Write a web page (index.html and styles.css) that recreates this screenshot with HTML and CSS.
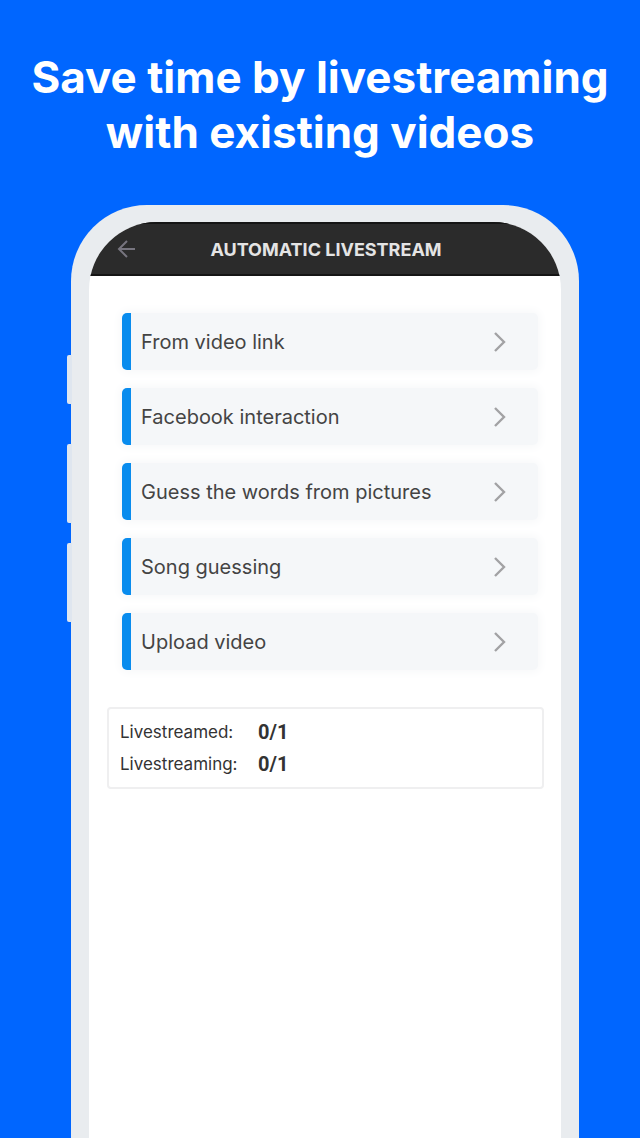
FILE: index.html
```html
<!DOCTYPE html>
<html lang="en">
<head>
    <meta charset="UTF-8">
    <meta name="viewport" content="width=device-width, initial-scale=1.0">
    <title>Automatic Livestream</title>
    <link rel="stylesheet" href="styles.css">
</head>
<body>
    <h1>Save time by livestreaming<br>with existing videos</h1>

    <div class="phone">
        <span class="side-button mute"></span>
        <span class="side-button volume-up"></span>
        <span class="side-button volume-down"></span>

        <div class="screen">
            <header class="top-bar">
                <button class="back" type="button" aria-label="Back">
                    <svg width="20" height="20" viewBox="0 0 20 20"><path d="M18 10H2M10 2L2 10l8 8"/></svg>
                </button>
                <h2>AUTOMATIC LIVESTREAM</h2>
            </header>

            <nav class="menu">
                <a href="#link">From video link
                    <svg width="14" height="22" viewBox="0 0 14 22"><path d="M2 2l9 9-9 9"/></svg>
                </a>
                <a href="#facebook">Facebook interaction
                    <svg width="14" height="22" viewBox="0 0 14 22"><path d="M2 2l9 9-9 9"/></svg>
                </a>
                <a href="#words">Guess the words from pictures
                    <svg width="14" height="22" viewBox="0 0 14 22"><path d="M2 2l9 9-9 9"/></svg>
                </a>
                <a href="#song">Song guessing
                    <svg width="14" height="22" viewBox="0 0 14 22"><path d="M2 2l9 9-9 9"/></svg>
                </a>
                <a href="#upload">Upload video
                    <svg width="14" height="22" viewBox="0 0 14 22"><path d="M2 2l9 9-9 9"/></svg>
                </a>
            </nav>

            <dl class="status">
                <dt>Livestreamed:</dt>
                <dd>0/1</dd>
                <dt>Livestreaming:</dt>
                <dd>0/1</dd>
            </dl>
        </div>
    </div>
</body>
</html>
```
FILE: styles.css
```css
* {
    box-sizing: border-box;
}

body {
    display: flex;
    flex-direction: column;
    min-height: 100vh;
    margin: 0;
    background: #0066ff;
    font-family: Inter, "Open Sans", sans-serif;
}

h1 {
    margin: 50px 0 45px;
    color: white;
    font-size: 44px;
    font-weight: 700;
    line-height: 55px;
    text-align: center;
}

.phone {
    position: relative;
    display: flex;
    flex: 1;
    margin: 0 61px 0 71px;
    padding: 17px 18px 0;
    background: #e9ecef;
    border-radius: 76px 76px 0 0;
}

/* hardware buttons on the left edge */
.side-button {
    position: absolute;
    left: -4px;
    width: 5px;
    height: 79px;
    background: #dfe6ef;
    border-radius: 2px 0 0 2px;
}

.mute {
    top: 150px;
    height: 49px;
}

.volume-up {
    top: 239px;
}

.volume-down {
    top: 338px;
}

.screen {
    flex: 1;
    background: white;
    border-radius: 68px 68px 0 0;
    overflow: hidden;
}

.top-bar {
    display: grid;
    grid-template-columns: 76px 1fr 74px;
    align-items: center;
    height: 54px;
    background: #2b2b2b;
    border-top: 2px solid #151515;
    border-bottom: 2px solid #151515;
}

.top-bar h2 {
    margin: 0;
    color: #e4e4e4;
    font-size: 18px;
    font-weight: 700;
    text-align: center;
    white-space: nowrap;
}

.back {
    display: flex;
    justify-content: center;
    padding: 0;
    background: none;
    border: none;
    cursor: pointer;
}

svg {
    fill: none;
    stroke: #a2a2a4;
    stroke-width: 2.4;
}

.back svg {
    stroke: #77757f;
    stroke-width: 2;
}

.menu {
    display: flex;
    flex-direction: column;
    gap: 18px;
    padding: 37px 23px 0 33px;
}

.menu a {
    display: flex;
    align-items: center;
    justify-content: space-between;
    height: 57px;
    padding: 0 31px 0 10px;
    background: #f5f7f9;
    border-left: 9px solid #098cee;
    border-radius: 5px;
    box-shadow: 0 0 8px 3px #f8f9fa;
    color: #444;
    font-size: 20px;
    text-decoration: none;
}

.status {
    display: grid;
    grid-template-columns: 138px 1fr;
    align-content: center;
    height: 82px;
    margin: 37px 17px 0 18px;
    padding: 0 11px;
    border: 2px solid #efeff0;
    border-radius: 4px;
    color: #333;
    font-size: 17px;
    line-height: 32px;
}

.status dd {
    margin: 0;
    font-family: Roboto, sans-serif;
    font-size: 20px;
    font-weight: 700;
}
```
